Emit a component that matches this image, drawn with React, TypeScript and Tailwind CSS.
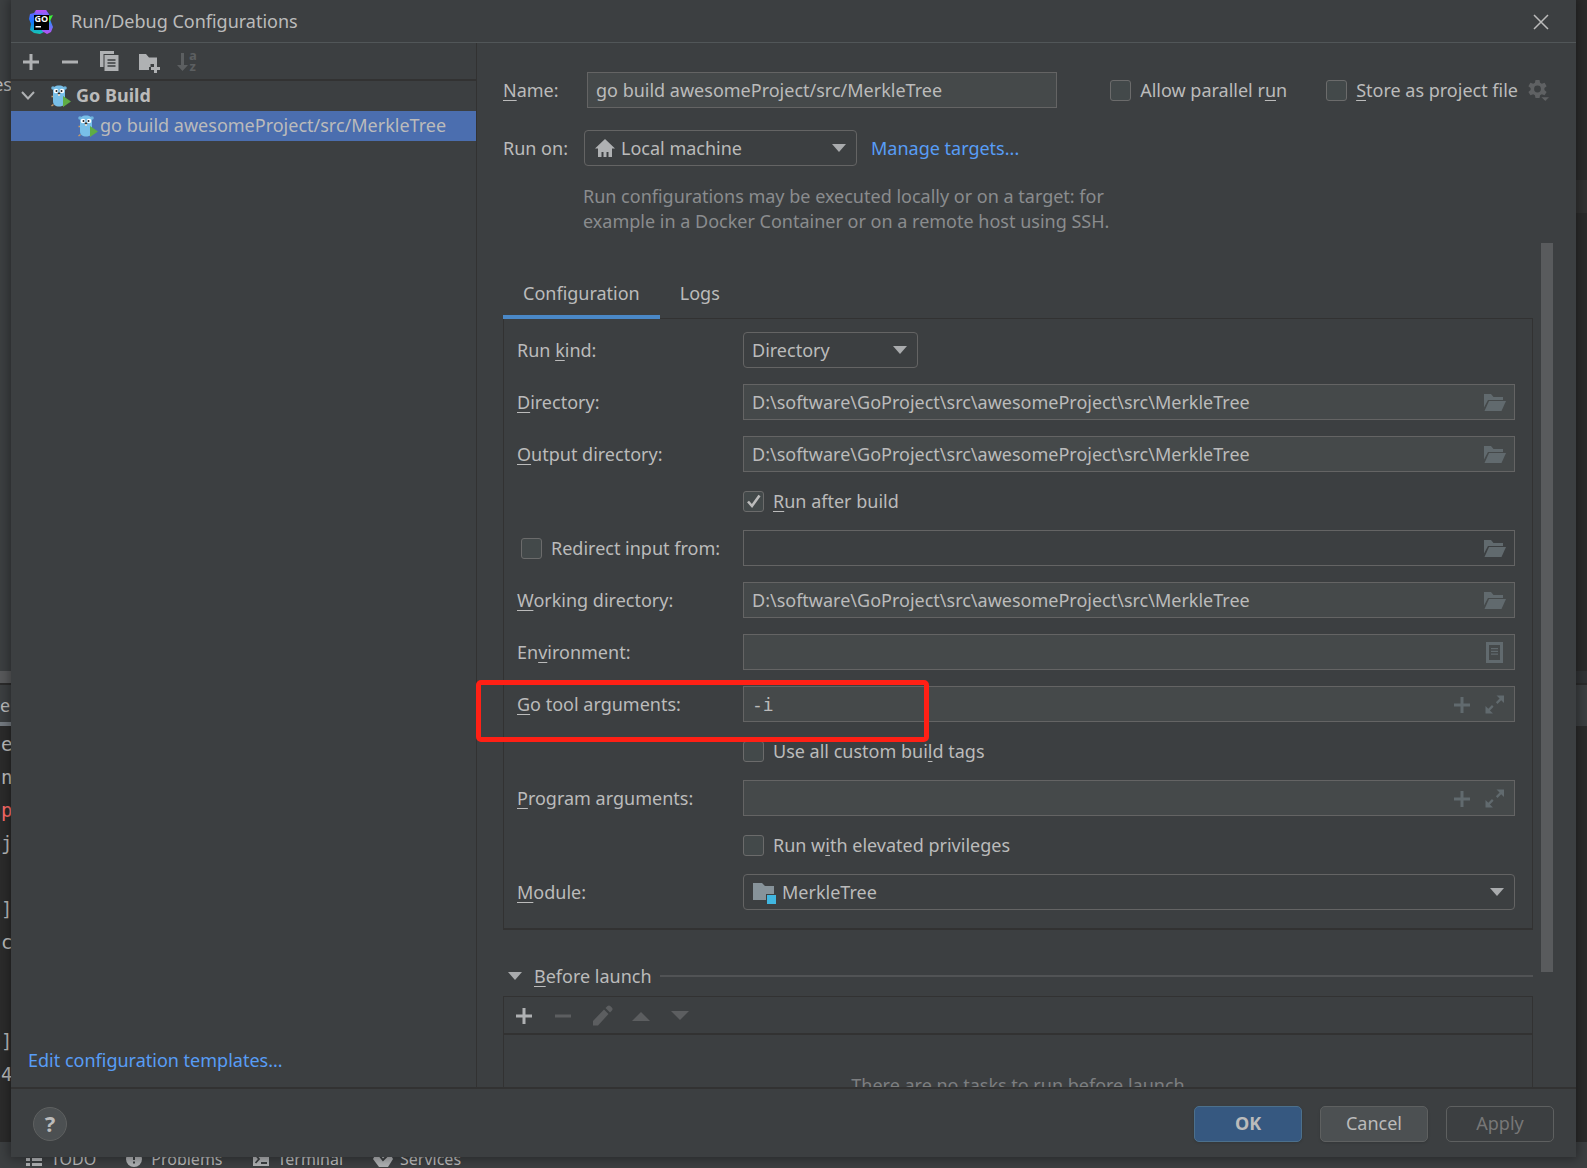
import React, { useState } from 'react';

const CONSOLE_LINES = [
    { text: 'e' },
    { text: 'n' },
    { text: 'p', error: true },
    { text: 'j' },
    { text: '' },
    { text: ']' },
    { text: 'c' },
    { text: '' },
    { text: '' },
    { text: ']' },
    { text: '4' },
];

const PROJECT_DIR = 'D:\\software\\GoProject\\src\\awesomeProject\\src\\MerkleTree';

/* ---------- icons ---------- */

const PlusIcon: React.FC = () => (
    <svg viewBox="0 0 24 24" className="w-6 h-6" fill="none" stroke="currentColor" strokeWidth="3">
        <path d="M12 5v16M4 13h16" />
    </svg>
);

const MinusIcon: React.FC = () => (
    <svg viewBox="0 0 24 24" className="w-6 h-6" fill="none" stroke="currentColor" strokeWidth="3">
        <path d="M4 13h16" />
    </svg>
);

const CopyIcon: React.FC = () => (
    <svg viewBox="0 0 24 24" className="w-6 h-6">
        <path d="M3 2h14v3H6.500v13H3z" fill="currentColor" />
        <path d="M7.500 6H21.500v16H7.500z" fill="currentColor" />
        <path d="M10.500 11h8M10.500 14h8M10.500 17h8" stroke="#3c3f41" strokeWidth="1.300" />
    </svg>
);

const NewFolderIcon: React.FC = () => (
    <svg viewBox="0 0 24 24" className="w-6 h-6" fill="currentColor">
        <path d="M3 5h7l3 3.500h8v6.500h-6.500v3H13V21H3z" />
        <path d="M18 15h3v3h3v3h-3v3h-3v-3h-3v-3h3z" />
    </svg>
);

const SortIcon: React.FC = () => (
    <svg viewBox="0 0 24 24" className="w-6 h-6" fill="currentColor">
        <path d="M6 4h3v12h4l-5.500 6L2 16h4z" />
        <text x="14" y="11" fontSize="13" fontWeight="700" fontFamily="Open Sans, sans-serif">a</text>
        <text x="14.500" y="22" fontSize="13" fontWeight="700" fontFamily="Open Sans, sans-serif">z</text>
    </svg>
);

const GopherIcon: React.FC = () => (
    <svg viewBox="0 0 22 24" className="w-[22px] h-6 shrink-0">
        <circle cx="3" cy="4" r="1.800" fill="#6fb3dc" />
        <circle cx="15" cy="4" r="1.800" fill="#6fb3dc" />
        <path d="M1.500 12.500h2M1.500 22l2-1.500M14 22l-1.500-1.500" stroke="#c69c6d" strokeWidth="1.500" />
        <path d="M9 1.500c4 0 6 1.500 6 5V17c0 4-2.500 5.500-6 5.500S3 21 3 17V6.500c0-3.500 2-5 6-5z" fill="#78bfe8" />
        <circle cx="6" cy="7" r="2.300" fill="#fff" />
        <circle cx="12" cy="7" r="2.300" fill="#fff" />
        <circle cx="6.500" cy="7" r="1" fill="#222" />
        <circle cx="11.500" cy="7" r="1" fill="#222" />
        <path d="M8 9.500h2v2.300H8z" fill="#f3e6d5" />
        <ellipse cx="9" cy="9.300" rx="1.400" ry="0.900" fill="#3a2c22" />
        <path d="M13 12l8 5.500-8 5.500z" fill="#5fad45" />
    </svg>
);

const GoLandLogo: React.FC = () => (
    <svg viewBox="0 0 24 24" className="w-6 h-6">
        <defs>
            <linearGradient id="logoBlue" x1="0" y1="0" x2="0" y2="1">
                <stop offset="0" stopColor="#7b5cff" />
                <stop offset="0.500" stopColor="#1478ff" />
                <stop offset="1" stopColor="#16c8b0" />
            </linearGradient>
            <linearGradient id="logoPurple" x1="0" y1="0" x2="0" y2="1">
                <stop offset="0" stopColor="#b84df5" />
                <stop offset="0.500" stopColor="#2f8cff" />
                <stop offset="1" stopColor="#c24df2" />
            </linearGradient>
        </defs>
        <path d="M7 0h10l3 4 2 13-5 4-6 3-6-1-4-3 1-6-2-5 1-5 4-1z" fill="url(#logoBlue)" />
        <path d="M7 0h10l2 4 3 8 2 5-2 5-4 2-5-3V4H6z" fill="url(#logoPurple)" />
        <path d="M24 5l-4 1-1 9 2-4z" fill="#3cf03c" />
        <path d="M5 5h15v15H5z" fill="#000" />
        <text x="5.500" y="12" fontSize="9" fontWeight="700" fill="#fff" fontFamily="Open Sans, sans-serif">GO</text>
        <path d="M6.500 16h5.500v1.500H6.500z" fill="#fff" />
    </svg>
);

const HomeIcon: React.FC = () => (
    <svg viewBox="0 0 20 18" className="w-5 h-[18px]" fill="#afb1b3">
        <path d="M10 0l10 9.500h-3V18h-3.500v-5h-2v5h-3v-5h-2v5H3V9.500H0z" />
    </svg>
);

const GearIcon: React.FC = () => (
    <svg viewBox="0 0 22 24" className="w-[22px] h-6" fill="#5f6163">
        <path
            fillRule="evenodd"
            d="M7.500 2h4l.6 2.800 1.700 1 2.800-1 2 3.400-2.200 1.900v1.900l2.200 1.900-2 3.400-2.800-1-1.700 1-.6 2.800h-4l-.6-2.800-1.700-1-2.800 1-2-3.400 2.200-1.900v-1.900L.4 8.200l2-3.400 2.800 1 1.700-1zM9.500 7.600a3.400 3.400 0 100 6.800 3.400 3.400 0 000-6.800z"
        />
        <path d="M13 19h8.500l-4.200 4.300z" stroke="#3c3f41" strokeWidth="0.500" />
    </svg>
);

const OpenFolderIcon: React.FC = () => (
    <svg viewBox="0 0 24 24" className="w-6 h-6" fill="currentColor">
        <path d="M1 4h7l2.500 3H20v3H5l-4 7.500z" />
        <path d="M6 11h17l-4.500 10H1.500z" />
    </svg>
);

const ListIcon: React.FC = () => (
    <svg viewBox="0 0 24 24" className="w-6 h-6" fill="currentColor">
        <path fillRule="evenodd" d="M3 2h17v21H3zM6 5v15h11V5z" />
        <path d="M8 8h7v1.300H8zM8 10.700h7V12H8zM8 13.400h7v1.300H8z" />
    </svg>
);

const ExpandIcon: React.FC = () => (
    <svg viewBox="0 0 24 24" className="w-6 h-6" fill="currentColor">
        <path d="M13.500 3.500H21V11l-2.800-2.800-3.700 3.700-1.600-1.600 3.700-3.700z" />
        <path d="M10 21.500H2.500V14l2.800 2.800L9 13.100l1.600 1.600-3.700 3.700z" />
    </svg>
);

const ModuleIcon: React.FC = () => (
    <svg viewBox="0 0 24 24" className="w-6 h-6">
        <path d="M1 3h9l3 3h9v8h-8v6H1z" fill="#87939a" />
        <path d="M15 15h9v9h-9z" fill="#40b6e0" />
    </svg>
);

const PencilIcon: React.FC = () => (
    <svg viewBox="0 0 24 24" className="w-6 h-6" fill="currentColor">
        <path d="M14 6.500l4.500 4.500L8 22.500H3V18zM15.500 5l2-2c1-1 2.200-.7 3 .2l1.300 1.300c1 1 1 2 .2 3l-2 2z" />
    </svg>
);

const ArrowDown: React.FC = () => (
    <svg viewBox="0 0 14 8" className="w-[14px] h-2 shrink-0 pointer-events-none" fill="#a9abad">
        <path d="M0 0h14L7 8z" />
    </svg>
);

/* ---------- controls ---------- */

interface CheckProps {
    id: string;
    checked?: boolean;
    children: React.ReactNode;
}

const Check: React.FC<CheckProps> = ({ id, checked = false, children }) => {
    const [on, setOn] = useState(checked);
    return (
        <div className="flex items-center gap-[9px]">
            <span className="relative flex shrink-0">
                <input
                    id={id}
                    type="checkbox"
                    checked={on}
                    onChange={(e) => setOn(e.target.checked)}
                    className="peer appearance-none w-[21px] h-[21px] rounded-[3px] border border-[#6b6b6b] bg-[#43494a]"
                />
                <svg
                    viewBox="0 0 21 21"
                    className="hidden peer-checked:block absolute inset-0 pointer-events-none"
                    fill="none"
                    stroke="#bbbbbb"
                    strokeWidth="2.600"
                >
                    <path d="M5 10.500l4 4.500L16.500 4.500" />
                </svg>
            </span>
            <label htmlFor={id} className="whitespace-nowrap">{children}</label>
        </div>
    );
};

interface FieldProps {
    id: string;
    value?: string;
    label?: string;
    disabled?: boolean;
    mono?: boolean;
    actions: { name: string; icon: React.ReactNode }[];
}

const Field: React.FC<FieldProps> = ({ id, value = '', label, disabled, mono, actions }) => {
    const [text, setText] = useState(value);
    return (
        <div
            className={`flex items-center gap-[9px] h-9 border border-[#646464] pl-2 pr-[7px] ${
                disabled ? 'bg-[#3c3f41]' : 'bg-[#45494a]'
            }`}
        >
            <input
                id={id}
                type="text"
                aria-label={label}
                value={text}
                disabled={disabled}
                onChange={(e) => setText(e.target.value)}
                className={`flex-1 min-w-0 bg-transparent outline-none ${
                    mono ? "font-['DejaVu_Sans_Mono',monospace]" : ''
                }`}
            />
            {actions.map((a) => (
                <button key={a.name} type="button" aria-label={a.name} className="text-[#616a6e]">
                    {a.icon}
                </button>
            ))}
        </div>
    );
};

interface ComboProps {
    id: string;
    options: string[];
    icon?: React.ReactNode;
    className?: string;
}

const Combo: React.FC<ComboProps> = ({ id, options, icon, className = '' }) => (
    <div className={`flex items-center gap-[6px] h-9 rounded border border-[#646464] pl-2 pr-[10px] ${className}`}>
        {icon}
        <select id={id} className="flex-1 min-w-0 appearance-none bg-transparent outline-none">
            {options.map((o) => (
                <option key={o}>{o}</option>
            ))}
        </select>
        <ArrowDown />
    </div>
);

const Key: React.FC<{ children: string }> = ({ children }) => (
    <span className="underline decoration-1 underline-offset-3">{children}</span>
);

const Row: React.FC<{ label?: React.ReactNode; children: React.ReactNode }> = ({ label, children }) => (
    <div className="flex items-center">
        <div className="w-[226px] shrink-0">{label}</div>
        <div className="flex-1 min-w-0">{children}</div>
    </div>
);

const browse = [{ name: 'Browse', icon: <OpenFolderIcon /> }];
const macros = [
    { name: 'Insert macro', icon: <PlusIcon /> },
    { name: 'Expand', icon: <ExpandIcon /> },
];

/* ---------- IDE window behind the dialog ---------- */

const IdeWindow: React.FC = () => (
    <div className="h-full flex flex-col bg-[#2b2b2b] text-[#bbbbbb]">
        <div className="h-[671px] flex justify-between">
            <div className="w-3 bg-[#3c3f41] pt-[72px] flex justify-end overflow-hidden">
                <span className="leading-6">es</span>
            </div>
            <div className="w-3 pt-[180px]">
                <div className="h-[33px] bg-[#323232]" />
            </div>
        </div>
        <div className="h-[14px] flex justify-between border-b-2 border-[#2b2b2b]">
            <div className="w-3 bg-[#58595b]" />
            <div className="w-3 bg-[#313335]" />
        </div>
        <div className="h-[41px] bg-[#3c3f41] flex flex-col justify-between">
            <span className="leading-[41px] h-[37px]">e</span>
            <div className="w-3 h-1 bg-[#747a80]" />
        </div>
        <div className="flex-1 min-h-0 overflow-hidden pt-[2px] pl-px font-['DejaVu_Sans_Mono',monospace] text-[19px] leading-[33px]">
            {CONSOLE_LINES.map((line, i) => (
                <div key={i} className={`h-[33px] ${line.error ? 'text-[#ff6b68]' : ''}`}>{line.text}</div>
            ))}
        </div>
        <div className="h-[27px] bg-[#3c3f41] border-t border-[#2b2b2b] pl-[26px] pt-[5px] flex items-start gap-[30px] overflow-hidden text-[16px]">
            <button type="button" className="flex items-center gap-[9px] leading-6">
                <svg viewBox="0 0 16 16" className="w-4 h-4" fill="#afb1b3">
                    <path d="M0 2h4v3H0zM6 2h10v3H6zM0 7h4v3H0zM6 7h10v3H6zM0 12h4v3H0zM6 12h10v3H6z" />
                </svg>
                TODO
            </button>
            <button type="button" className="flex items-center gap-[9px] leading-6">
                <svg viewBox="0 0 16 16" className="w-4 h-4">
                    <circle cx="8" cy="8" r="8" fill="#afb1b3" />
                    <path d="M7 3h2v6H7zM7 10.500h2v2H7z" fill="#3c3f41" />
                </svg>
                Problems
            </button>
            <button type="button" className="flex items-center gap-[9px] leading-6">
                <svg viewBox="0 0 16 16" className="w-4 h-4">
                    <path d="M0 1h16v14H0z" fill="#afb1b3" />
                    <path d="M2.500 4l3.500 4-3.500 4M8 12h6" stroke="#3c3f41" strokeWidth="1.800" fill="none" />
                </svg>
                Terminal
            </button>
            <button type="button" className="flex items-center gap-[7px] leading-6">
                <svg viewBox="0 0 20 16" className="w-5 h-4">
                    <path d="M4 1h12l4 7-5 8H6L0 8z" fill="#afb1b3" />
                    <path d="M6 4l4 5 5-5" stroke="#3c3f41" strokeWidth="2" fill="none" />
                </svg>
                Services
            </button>
        </div>
    </div>
);

/* ---------- dialog ---------- */

const Sidebar: React.FC = () => (
    <aside className="w-[466px] shrink-0 flex flex-col border-r border-[#323232]">
        <div className="h-[38px] flex items-center gap-[15px] pl-2 border-b-2 border-[#323232] text-[#afb1b3]">
            <button type="button" aria-label="Add"><PlusIcon /></button>
            <button type="button" aria-label="Remove"><MinusIcon /></button>
            <button type="button" aria-label="Copy"><CopyIcon /></button>
            <button type="button" aria-label="New folder"><NewFolderIcon /></button>
            <button type="button" aria-label="Sort" className="text-[#5c5f61]"><SortIcon /></button>
        </div>
        <ul className="leading-7">
            <li className="h-[30px] flex items-start pl-[10px] font-bold">
                <svg viewBox="0 0 14 9" className="w-[14px] h-[9px] mt-[10px] mr-[15px]" fill="none" stroke="#afb1b3" strokeWidth="2">
                    <path d="M1 1l6 6.500L13 1" />
                </svg>
                <span className="pt-[3px]"><GopherIcon /></span>
                <span className="ml-1">Go Build</span>
            </li>
            <li className="h-[30px] flex items-start pl-[66px] bg-[#4b6eaf]">
                <span className="pt-[3px]"><GopherIcon /></span>
                <span className="ml-px">go build awesomeProject/src/MerkleTree</span>
            </li>
        </ul>
        <a href="#templates" className="mt-auto mb-[14px] ml-[17px] text-[#589df6]">
            Edit configuration templates...
        </a>
    </aside>
);

const ConfigurationTab: React.FC = () => (
    <div className="flex flex-col gap-4 border border-b-2 border-[#323232] pt-[13px] pb-[18px] pl-[13px] pr-[17px]">
        <Row label={<label htmlFor="kind">Run <Key>k</Key>ind:</label>}>
            <Combo id="kind" options={['Directory', 'File', 'Package']} className="w-[175px]" />
        </Row>
        <Row label={<label htmlFor="dir"><Key>D</Key>irectory:</label>}>
            <Field id="dir" value={PROJECT_DIR} actions={browse} />
        </Row>
        <Row label={<label htmlFor="out"><Key>O</Key>utput directory:</label>}>
            <Field id="out" value={PROJECT_DIR} actions={browse} />
        </Row>
        <div className="h-[26px] flex items-center pl-[226px]">
            <Check id="after" checked><Key>R</Key>un after build</Check>
        </div>
        <Row label={<div className="pl-1"><Check id="redirect">Redirect input from:</Check></div>}>
            <Field id="input" label="Input file" disabled actions={browse} />
        </Row>
        <Row label={<label htmlFor="wd"><Key>W</Key>orking directory:</label>}>
            <Field id="wd" value={PROJECT_DIR} actions={browse} />
        </Row>
        <Row label={<label htmlFor="env">En<Key>v</Key>ironment:</label>}>
            <Field id="env" actions={[{ name: 'Edit variables', icon: <ListIcon /> }]} />
        </Row>
        <div className="relative">
            <Row label={<label htmlFor="goargs"><Key>G</Key>o tool arguments:</label>}>
                <Field id="goargs" value="-i" mono actions={macros} />
            </Row>
            <div className="absolute -left-[41px] -top-[6px] w-[453px] h-[62px] rounded-[5px] border-5 border-[#ff2015] pointer-events-none z-10" />
        </div>
        <div className="h-[26px] flex items-center pl-[226px]">
            <Check id="tags">Use all custom bui<Key>l</Key>d tags</Check>
        </div>
        <Row label={<label htmlFor="args"><Key>P</Key>rogram arguments:</label>}>
            <Field id="args" actions={macros} />
        </Row>
        <div className="h-[26px] flex items-center pl-[226px]">
            <Check id="elevated">Run w<Key>i</Key>th elevated privileges</Check>
        </div>
        <Row label={<label htmlFor="module"><Key>M</Key>odule:</label>}>
            <Combo id="module" options={['MerkleTree']} icon={<ModuleIcon />} />
        </Row>
    </div>
);

const BeforeLaunch: React.FC = () => (
    <section>
        <div className="flex items-center mt-[34px] h-6 pl-[5px]">
            <ArrowDown />
            <h2 className="ml-3"><Key>B</Key>efore launch</h2>
            <div className="flex-1 h-[2px] ml-2 bg-[#515355]" />
        </div>
        <div className="mt-2 border border-[#323232]">
            <div className="h-[38px] flex items-center gap-[15px] pl-2 border-b-2 border-[#323232] text-[#5c5e60]">
                <button type="button" aria-label="Add task" className="text-[#afb1b3]"><PlusIcon /></button>
                <button type="button" aria-label="Remove task"><MinusIcon /></button>
                <button type="button" aria-label="Edit task"><PencilIcon /></button>
                <button type="button" aria-label="Move up">
                    <svg viewBox="0 0 24 24" className="w-6 h-6" fill="currentColor"><path d="M3 18h18l-9-9z" /></svg>
                </button>
                <button type="button" aria-label="Move down">
                    <svg viewBox="0 0 24 24" className="w-6 h-6" fill="currentColor"><path d="M3 8h18l-9 9z" /></svg>
                </button>
            </div>
            <p className="pt-[38px] h-[120px] text-center text-[#7c7e80]">There are no tasks to run before launch</p>
        </div>
    </section>
);

const App: React.FC = () => {
    const [tab, setTab] = useState('Configuration');

    return (
        <div className="relative h-screen overflow-hidden font-['Noto_Sans','Noto_Sans_CJK_SC',sans-serif] text-[18px] leading-[25px]">
            <IdeWindow />
            <div
                role="dialog"
                aria-labelledby="title"
                className="absolute inset-x-[11px] top-0 bottom-[11px] flex flex-col bg-[#3c3f41] text-[#bbbbbb] shadow-[0_0_10px_2px_rgba(0,0,0,0.35)]"
            >
                <header className="h-[43px] shrink-0 flex items-center pt-px pl-[18px] pr-[23px] border-b border-[#515658]">
                    <GoLandLogo />
                    <h1 id="title" className="ml-[18px]">Run/Debug Configurations</h1>
                    <button type="button" aria-label="Close" className="ml-auto">
                        <svg viewBox="0 0 24 24" className="w-6 h-6" fill="none" stroke="#bbbbbb" strokeWidth="1.500">
                            <path d="M5 5l14 14M19 5L5 19" />
                        </svg>
                    </button>
                </header>

                <div className="flex-1 min-h-0 flex">
                    <Sidebar />

                    <main className="flex-1 min-w-0 flex flex-col pl-[26px] pt-[29px]">
                        <div className="flex items-center pr-[26px]">
                            <label htmlFor="name" className="w-[84px] shrink-0"><Key>N</Key>ame:</label>
                            <input
                                id="name"
                                type="text"
                                defaultValue="go build awesomeProject/src/MerkleTree"
                                className="flex-1 min-w-0 h-9 px-2 bg-[#45494a] border border-[#646464] outline-none"
                            />
                            <div className="flex items-center gap-[39px] ml-[53px]">
                                <Check id="parallel">Allow parallel r<Key>u</Key>n</Check>
                                <Check id="store"><Key>S</Key>tore as project file</Check>
                            </div>
                            <button type="button" aria-label="Storage options" className="ml-[10px]"><GearIcon /></button>
                        </div>
                        <div className="flex items-center mt-[22px]">
                            <label htmlFor="target" className="w-[81px] shrink-0">Run on:</label>
                            <Combo id="target" options={['Local machine']} icon={<HomeIcon />} className="w-[273px] pl-[10px]" />
                            <a href="#targets" className="ml-[14px] text-[#589df6]">Manage targets...</a>
                        </div>
                        <p className="mt-[18px] ml-20 w-[560px] text-[#8a8c8e]">
                            Run configurations may be executed locally or on a target: for<br />
                            example in a Docker Container or on a remote host using SSH.
                        </p>

                        <div className="flex-1 min-h-0 mt-[9px] flex pr-[23px]">
                            <div className="flex-1 min-w-0 overflow-y-clip pt-7">
                                <div role="tablist" className="relative flex h-12 -mb-px">
                                    {['Configuration', 'Logs'].map((name) => (
                                        <button
                                            key={name}
                                            type="button"
                                            role="tab"
                                            aria-selected={tab === name}
                                            onClick={() => setTab(name)}
                                            className={`px-5 border-b-4 ${tab === name ? 'border-[#4a88c7]' : 'border-transparent'}`}
                                        >
                                            {name}
                                        </button>
                                    ))}
                                </div>
                                <ConfigurationTab />
                                <BeforeLaunch />
                            </div>
                            <div className="w-3 ml-2">
                                <div className="h-[729px] bg-[#595b5d]" />
                            </div>
                        </div>
                    </main>
                </div>

                <footer className="h-[70px] shrink-0 flex items-center gap-[18px] pt-px pl-[22px] pr-[22px] border-t-2 border-[#323232]">
                    <button
                        type="button"
                        aria-label="Help"
                        className="w-[34px] h-[34px] mr-auto rounded-full border border-[#5e6060] bg-[#4c5052] text-[22px] font-bold"
                    >
                        ?
                    </button>
                    <button type="button" className="w-[108px] h-9 rounded-[5px] border border-[#4c708c] bg-[#365880] font-bold shadow-sm">OK</button>
                    <button type="button" className="w-[108px] h-9 rounded-[5px] border border-[#5e6060] bg-[#4c5052] shadow-sm">Cancel</button>
                    <button type="button" className="w-[108px] h-9 rounded-[5px] border border-[#5e6060] text-[#777777]">Apply</button>
                </footer>
            </div>
        </div>
    );
};

export default App;
